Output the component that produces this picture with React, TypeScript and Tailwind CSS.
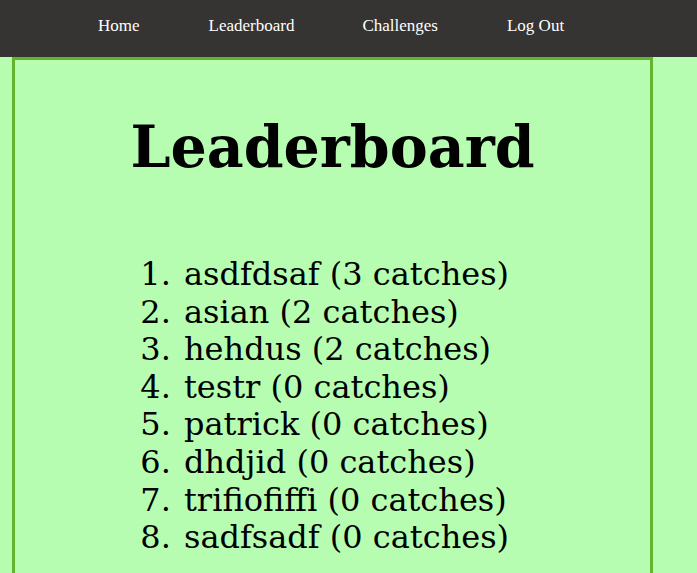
import React from 'react';

const players = [
  { name: 'asdfdsaf', catches: 3 },
  { name: 'asian', catches: 2 },
  { name: 'hehdus', catches: 2 },
  { name: 'testr', catches: 0 },
  { name: 'patrick', catches: 0 },
  { name: 'dhdjid', catches: 0 },
  { name: 'trifiofiffi', catches: 0 },
  { name: 'sadfsadf', catches: 0 },
];

export default function App() {
  return (
    <div className="h-[573px] bg-[#b6fdb1] overflow-hidden">
      <nav className="h-[57px] bg-[#363333] flex items-center pb-[6px] text-white text-[17px] font-['Liberation_Serif',serif]">
        <a className="ml-[98px]">Home</a>
        <a className="ml-[69px]">Leaderboard</a>
        <a className="ml-[68px]">Challenges</a>
        <a className="ml-[69px]">Log Out</a>
      </nav>
      {/* box runs on below the fold, so no bottom border shows */}
      <div className="ml-[12px] w-[641px] h-[540px] border-[3px] border-b-0 border-[#62b330] font-['DejaVu_Serif',serif] text-black">
        <h1 className="text-center text-[57px] font-bold mt-[47px] leading-[80px]">Leaderboard</h1>
        <ol className="list-decimal ml-[166px] mt-[69px] text-[32px] leading-[37.6px]">
          {players.map((p) => (
            <li key={p.name} className="pl-[3px]">
              {p.name} ({p.catches} catches)
            </li>
          ))}
        </ol>
      </div>
    </div>
  );
}
